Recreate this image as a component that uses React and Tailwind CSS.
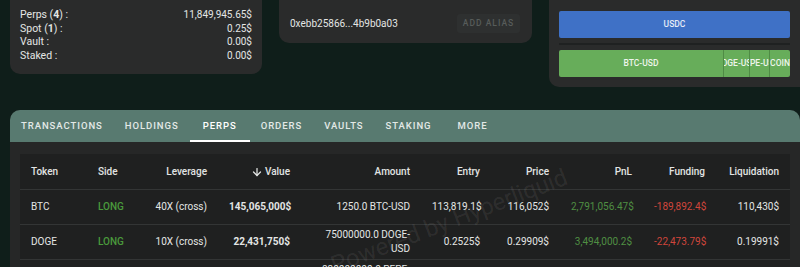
import { ArrowDown } from 'lucide-react';

const summary = [
    { label: 'Perps', count: 4, value: '11,849,945.65$' },
    { label: 'Spot', count: 1, value: '0.25$' },
    { label: 'Vault', value: '0.00$' },
    { label: 'Staked', value: '0.00$' },
];

const tabs = ['Transactions', 'Holdings', 'Perps', 'Orders', 'Vaults', 'Staking', 'More'];

const segments = [
    { name: 'BTC-USD', width: 164 },
    { name: 'DOGE-USD', width: 26 },
    { name: 'PEPE-USD', width: 20 },
    { name: 'COIN', width: 21 },
];

const rows = [
    { token: 'BTC', lev: '40X (cross)', value: '145,065,000$', amount: '1250.0 BTC-USD', entry: '113,819.1$', price: '116,052$', pnl: '2,791,056.47$', funding: '-189,892.4$', liq: '110,430$' },
    { token: 'DOGE', lev: '10X (cross)', value: '22,431,750$', amount: '75000000.0 DOGE-USD', entry: '0.2525$', price: '0.29909$', pnl: '3,494,000.2$', funding: '-22,473.79$', liq: '0.19991$' },
    { token: 'PEPE', lev: '10X (cross)', value: '9,830,120$', amount: '830000000.0 PEPE-USD', entry: '0.00001$', price: '0.00001$', pnl: '1,024,310.8$', funding: '-8,512.33$', liq: '0.00001$' },
];

const cols = 'grid grid-cols-[67px_53px_78px_83px_120px_70px_69px_83px_73px_74px]';

export default function App() {
    return (
        <div className="min-h-screen bg-[#0f1e1a] text-[#e4e6e5] overflow-hidden" style={{ fontFamily: 'Roboto, "Noto Sans", sans-serif' }}>
            {/* Top cards */}
            <div className="flex items-start gap-[17px] pl-[10px]">
                <div className="w-[252px] bg-[#2a2b2b] rounded-b-[10px] px-[10px] pt-[8px] pb-[12px] text-[10.5px] leading-[13.5px]">
                    {summary.map((s) => (
                        <div key={s.label} className="flex justify-between">
                            <span>
                                {s.label}
                                {s.count !== undefined && <> (<b className="font-bold">{s.count}</b>)</>} :
                            </span>
                            <span className="text-[10px]">{s.value}</span>
                        </div>
                    ))}
                </div>

                <div className="w-[253px] h-[43px] bg-[#2a2b2b] rounded-b-[10px] flex items-center justify-between pl-[11px] pr-[12px] pt-[4px]">
                    <span className="text-[10px]">0xebb25866...4b9b0a03</span>
                    <button className="h-[19px] w-[63px] bg-[#2e3030] rounded-[3px] text-[8.5px] tracking-[0.12em] font-medium text-[#575c5a]">
                        ADD ALIAS
                    </button>
                </div>

                <div className="flex-1 bg-[#2a2b2b] rounded-bl-[10px] px-[10px] pt-[11px] pb-[10px]">
                    <div className="h-[27px] bg-[#3f71c6] rounded-[2px] flex items-center justify-center text-[8.5px] font-medium text-[#e6ecf6]">
                        USDC
                    </div>
                    <div className="h-[2px] bg-[#1f2121] my-[5px]"></div>
                    <div className="h-[27px] flex rounded-[2px] overflow-hidden bg-[#67ad5a]">
                        {segments.map((s, i) => (
                            <div
                                key={s.name}
                                className={`flex items-center justify-center overflow-hidden whitespace-nowrap text-[8.5px] font-medium text-[#eef5ec] ${i > 0 ? 'border-l border-[#4f8b45]' : ''}`}
                                style={{ width: s.width }}
                            >
                                {s.name}
                            </div>
                        ))}
                    </div>
                </div>
            </div>

            {/* Main panel */}
            <div className="mt-[23px] ml-[10px] rounded-t-[10px] overflow-hidden bg-[#262727]">
                <div className="h-[32px] bg-[#587a70] flex">
                    {tabs.map((t) => (
                        <div
                            key={t}
                            className={`relative min-w-[60px] px-[11px] flex items-center justify-center text-[9.5px] font-medium uppercase tracking-[0.1em] ${t === 'Perps' ? 'text-white' : 'text-[#e3e9e7]'}`}
                        >
                            {t}
                            {t === 'Perps' && <span className="absolute left-0 right-0 bottom-0 h-[2px] bg-white"></span>}
                        </div>
                    ))}
                </div>

                <div className="px-[10px] pt-[12px]">
                    <div className="relative bg-[#1f2020] overflow-hidden text-[10px]">
                        <div className={`${cols} h-[36px] items-center font-medium text-[#e2e4e3] border-b border-[#333535]`}>
                            <div className="px-[11px]">Token</div>
                            <div className="px-[11px]">Side</div>
                            <div className="px-[11px] text-right">Leverage</div>
                            <div className="px-[11px] flex items-center justify-end gap-[2px]">
                                <ArrowDown size={12} strokeWidth={2.5} />
                                Value
                            </div>
                            <div className="px-[11px] text-right">Amount</div>
                            <div className="px-[11px] text-right">Entry</div>
                            <div className="px-[11px] text-right">Price</div>
                            <div className="px-[11px] text-right">PnL</div>
                            <div className="px-[11px] text-right">Funding</div>
                            <div className="px-[11px] text-right">Liquidation</div>
                        </div>
                        {rows.map((r) => (
                            <div key={r.token} className={`${cols} h-[35px] items-center leading-[14px] border-b border-[#333535]`}>
                                <div className="px-[11px]">{r.token}</div>
                                <div className="px-[11px] font-medium text-[#4a9a3c]">LONG</div>
                                <div className="px-[11px] text-right">{r.lev}</div>
                                <div className="px-[11px] text-right font-bold">{r.value}</div>
                                <div className="px-[11px] text-right">{r.amount}</div>
                                <div className="px-[11px] text-right">{r.entry}</div>
                                <div className="px-[11px] text-right">{r.price}</div>
                                <div className="px-[11px] text-right text-[#4f8f43]">{r.pnl}</div>
                                <div className="px-[11px] text-right text-[#d0463c]">{r.funding}</div>
                                <div className="px-[11px] text-right">{r.liq}</div>
                            </div>
                        ))}
                        {/* Watermark */}
                        <div className="pointer-events-none absolute left-[312px] top-[100px] -rotate-[21deg] origin-left whitespace-nowrap leading-none text-[24px] text-white/[0.08]">
                            Powered by Hyperliquid
                        </div>
                    </div>
                </div>
            </div>
        </div>
    );
}
